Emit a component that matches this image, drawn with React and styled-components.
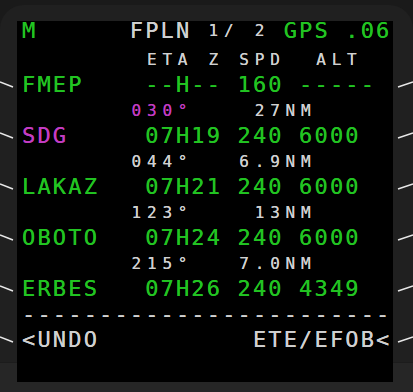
import React from "react";
import styled, { createGlobalStyle } from "styled-components";

const GREEN = "#22c422";
const WHITE = "#d0d0d0";
const MAGENTA = "#c33cc3";
const L = "large";
const S = "small";

const GlobalStyle = createGlobalStyle`
  html, body {
    margin: 0;
    padding: 0;
    background: #1a1a1a;
  }
`;

// each line: [column, text, colour, size]
const lines = [
  [[0, "M", GREEN, L], [7, "FPLN", WHITE, L], [12, "1/", WHITE, S], [15, "2", WHITE, S], [17, "GPS", GREEN, L], [21, ".06", GREEN, L]],
  [[8, "ETA", WHITE, S], [12, "Z", WHITE, S], [14, "SPD", WHITE, S], [19, "ALT", WHITE, S]],
  [[0, "FMEP", GREEN, L], [8, "--H--", GREEN, L], [14, "160", GREEN, L], [18, "-----", GREEN, L]],
  [[7, "030°", MAGENTA, S], [15, "27NM", WHITE, S]],
  [[0, "SDG", MAGENTA, L], [8, "07H19", GREEN, L], [14, "240", GREEN, L], [18, "6000", GREEN, L]],
  [[7, "044°", WHITE, S], [14, "6.9NM", WHITE, S]],
  [[0, "LAKAZ", GREEN, L], [8, "07H21", GREEN, L], [14, "240", GREEN, L], [18, "6000", GREEN, L]],
  [[7, "123°", WHITE, S], [15, "13NM", WHITE, S]],
  [[0, "OBOTO", GREEN, L], [8, "07H24", GREEN, L], [14, "240", GREEN, L], [18, "6000", GREEN, L]],
  [[7, "215°", WHITE, S], [14, "7.0NM", WHITE, S]],
  [[0, "ERBES", GREEN, L], [8, "07H26", GREEN, L], [14, "240", GREEN, L], [18, "4349", GREEN, L]],
  [[0, "-".repeat(24), WHITE, L]],
  [[0, "<UNDO", WHITE, L], [15, "ETE/EFOB<", WHITE, L]],
];

// large rows centres, relative to the top of the screen (y = 21)
const tickRows = [85, 136, 187, 238, 289, 340].map((y) => y - 21);

function toCells(segs) {
  const cells = Array.from({ length: 24 }, () => ({ ch: "\u00a0", color: WHITE, size: L }));
  segs.forEach(([col, text, color, size]) => {
    [...text].forEach((ch, i) => {
      if (ch !== " ") cells[col + i] = { ch, color, size };
    });
  });
  return cells;
}

function Ticks({ side }) {
  return (
    <svg width={side === "left" ? 17 : 20} height="341">
      {tickRows.map((y) =>
        side === "left" ? (
          <line key={y} x1="0" y1={y - 3} x2="13" y2={y + 2} stroke="#e8e8e8" strokeWidth="1.5" />
        ) : (
          <line key={y} x1="5" y1={y + 2} x2="20" y2={y - 3} stroke="#e8e8e8" strokeWidth="1.5" />
        )
      )}
    </svg>
  );
}

function App() {
  return (
    <Page>
      <GlobalStyle />
      <Bezel>
        <Main>
          <Side $width={17}>
            <Ticks side="left" />
            <SideBand />
          </Side>
          <Screen>
            {lines.map((segs, i) => (
              <Line key={i} $title={i === 0}>
                {toCells(segs).map((c, j) => (
                  <Cell key={j} $color={c.color} $size={c.size}>
                    {c.ch}
                  </Cell>
                ))}
              </Line>
            ))}
          </Screen>
          <Side $width={20}>
            <Ticks side="right" />
            <SideBand />
          </Side>
        </Main>
        <BottomStrip />
      </Bezel>
    </Page>
  );
}

const Page = styled.div`
  width: 413px;
  height: 392px;
  overflow: hidden;
  background: #1a1a1a;
  padding-top: 5px;
  box-sizing: border-box;
`;

const Bezel = styled.div`
  height: 387px;
  background: #202020;
  border-radius: 24px 24px 0 0;
  padding-top: 16px;
  box-sizing: border-box;
  display: flex;
  flex-direction: column;
`;

const Main = styled.div`
  display: flex;
  height: 361px;
`;

const Side = styled.div`
  width: ${(p) => p.$width}px;
  display: flex;
  flex-direction: column;

  svg {
    display: block;
    flex: none;
  }
`;

const SideBand = styled.div`
  flex: 1;
  background: #262626;
  border-top: 1px solid #1c1c1c;
`;

const BottomStrip = styled.div`
  flex: 1;
  background: #262626;
`;

const Screen = styled.div`
  width: 376px;
  height: 361px;
  background: #000;
  padding-left: 4px;
  box-sizing: border-box;
  display: flex;
  flex-direction: column;
  font-family: "DejaVu Sans Mono", "Liberation Mono", monospace;
`;

const Line = styled.div`
  display: grid;
  grid-template-columns: repeat(24, 15.4px);
  height: ${(p) => (p.$title ? "19px" : "25.5px")};
  line-height: ${(p) => (p.$title ? "19px" : "25.5px")};
  margin-bottom: ${(p) => (p.$title ? "6.75px" : "0")};
  flex: none;
`;

const Cell = styled.span`
  text-align: center;
  color: ${(p) => p.$color};
  font-size: ${(p) => (p.$size === L ? "22px" : "16px")};
  text-shadow: 0 0 0.4px ${(p) => p.$color};
  white-space: pre;
`;

export default App;
